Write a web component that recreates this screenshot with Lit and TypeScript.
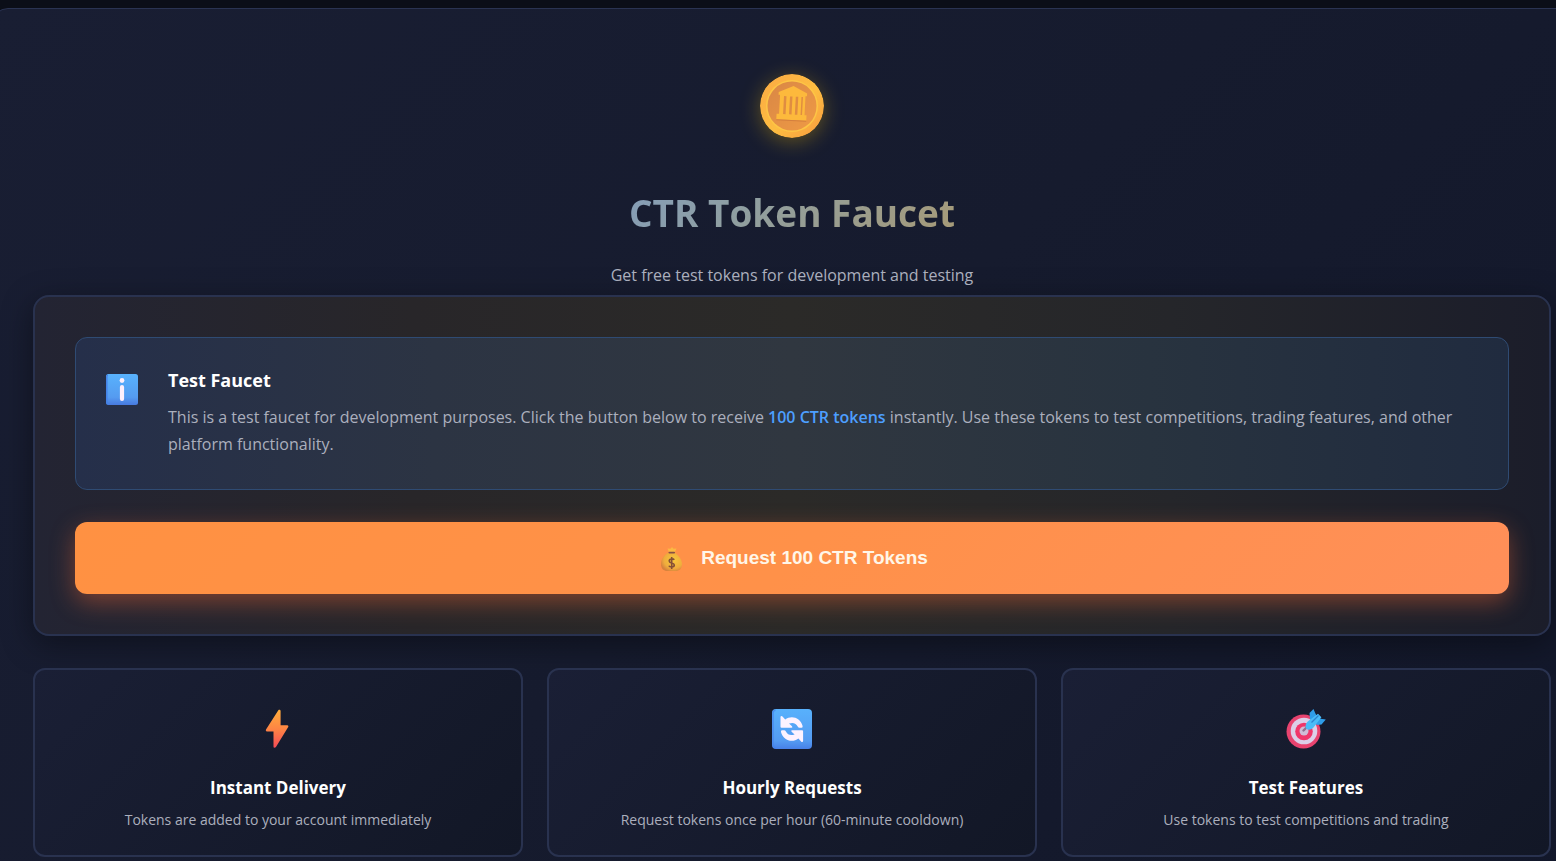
import { LitElement, html, css, svg } from "lit";
import { customElement } from "lit/decorators.js";

const coin = svg`
  <defs>
    <linearGradient id="rim" x1="0" y1="0" x2="1" y2="1">
      <stop offset="0" stop-color="#fba944" /><stop offset=".55" stop-color="#fdbd41" /><stop offset="1" stop-color="#f89b3f" />
    </linearGradient>
    <linearGradient id="face" x1="0" y1="0" x2="1" y2="1">
      <stop offset="0" stop-color="#d98745" /><stop offset="1" stop-color="#ef9a45" />
    </linearGradient>
  </defs>
  <circle cx="32" cy="32" r="32" fill="url(#rim)" />
  <circle cx="32" cy="32" r="26" fill="#fdc545" />
  <circle cx="32" cy="32" r="24.500" fill="url(#face)" />
  <g transform="rotate(3 32 32)">
    <path d="M32.500 12 46.500 18.800V21.500H45V40.500H47V46H17V40.500H19.500V21.500H18V18.800Z" fill="#fdb93c" />
    <path d="M23.500 22.500h2.500V40.500h-2.500zM29.500 22.500h2.500V40.500h-2.500zM35.300 22.500h2.500V40.500h-2.500zM41 22.500h1.500V40.500h-1.500z" fill="#e08d41" />
    <path d="M17 46.500H47" stroke="#d47f3f" stroke-width="1" />
  </g>`;

const info = svg`
  <defs>
    <linearGradient id="tile" x1="0" y1="0" x2="0" y2="1">
      <stop offset="0" stop-color="#58b2fd" /><stop offset=".75" stop-color="#559bf0" /><stop offset="1" stop-color="#4779df" />
    </linearGradient>
  </defs>
  <rect width="32" height="31" rx="2.500" fill="url(#tile)" />
  <path d="M2 1Q.8 1 .8 3V28Q.8 30 3 30" fill="none" stroke="#4482e6" stroke-width="1.500" />
  <circle cx="16" cy="6.500" r="2.400" fill="#fff0fc" />
  <path d="M16 13V25" stroke="#fff0fc" stroke-width="4.200" stroke-linecap="round" />`;

const bag = svg`
  <defs>
    <radialGradient id="sack" cx=".6" cy=".4" r=".65">
      <stop offset="0" stop-color="#f8c83c" /><stop offset=".7" stop-color="#efac3d" /><stop offset="1" stop-color="#d7823d" />
    </radialGradient>
  </defs>
  <path d="M6.500 6C3 8.500 0 12 0 17C0 22 3 24 6 24H15C18 24 21 22 21 17C21 12 17 8.500 14.500 6Z" fill="url(#sack)" />
  <path d="M8 5 6.500 1.500 9.500 1.800 11 0 12.500 1.800 15.500 1.500 14 5Z" fill="#fbb843" />
  <rect x="7.500" y="4.800" width="6.500" height="1.800" rx=".8" fill="#855044" />
  <path d="M13.200 12.800C12.500 11.500 8.200 11.400 8.200 13.900C8.200 16.600 13.300 15.300 13.300 18C13.300 20.600 8.600 20.400 7.900 18.700M10.700 10V22" fill="none" stroke="#855037" stroke-width="1.600" />`;

const bolt = svg`
  <defs>
    <linearGradient id="flash" x1="0" y1="0" x2="0" y2="1">
      <stop offset="0" stop-color="#ffad3b" /><stop offset=".5" stop-color="#fd8544" /><stop offset="1" stop-color="#f64b56" />
    </linearGradient>
  </defs>
  <path transform="translate(-2 0)" d="M22.500 1C23.500 .5 24.600 1 24.600 2V16.300H31.500Q33 16.800 32.200 18L19.800 38.300Q17.500 39.500 17.500 37.500V22.500H10.700Q9.300 22 10 20.600Z" fill="url(#flash)" />`;

const cycle = svg`
  <defs>
    <linearGradient id="key" x1="0" y1="0" x2="0" y2="1">
      <stop offset="0" stop-color="#58b1fc" /><stop offset=".8" stop-color="#549bf2" /><stop offset="1" stop-color="#4780e8" />
    </linearGradient>
  </defs>
  <rect width="40" height="40" rx="4" fill="url(#key)" />
  <path d="M3.500 1.200Q1 1.500 1 4V35.500Q1.200 38.500 4 39" fill="none" stroke="#4582eb" stroke-width="1.600" opacity=".7" />
  <g fill="#fdf2ff">
    <path id="turn" d="M9.500 7Q8.500 7 8.500 8V17.800Q8.500 18.800 9.500 18.800H19.600Q21 18.400 20 17.300L17 14.600Q23 12.400 25.700 17.500Q26.300 18.800 27.500 18.800H29.600Q31 18.600 30.600 17C28.500 8.200 19 6 13.200 10.500L10.500 7.500Q10 7 9.500 7Z" />
    <use href="#turn" transform="rotate(180 19.800 20)" />
  </g>`;

const target = svg`
  <circle cx="17.500" cy="22.500" r="17" fill="#e8436f" />
  <circle cx="18" cy="22" r="13.300" fill="#dccfe8" />
  <circle cx="18" cy="22.500" r="8.800" fill="#f0366a" />
  <circle cx="18" cy="22" r="4.500" fill="#d0bcd6" />
  <path d="M17.500 21.500 22 17" stroke="#8d7090" stroke-width="2.400" stroke-linecap="round" />
  <path d="M24 10 23.500 4 27.500 0Q29 4 31 7.500L33 9.500 39.800 10.500 35.500 15.500 31 16Z" fill="#2f9de8" />
  <path d="M19.500 17.500Q19.500 14 23 11.500L32 4.800 35.400 8.300 27.500 18.500Q24.500 21.500 21.500 20.500Q19.500 19.800 19.500 17.500Z" fill="#49bcf8" />
  <path d="M25.500 13.500 32.500 6.500" stroke="#2c83ce" stroke-width="1.200" />`;

const features = [
  { icon: bolt, title: "Instant Delivery", text: "Tokens are added to your account immediately" },
  { icon: cycle, title: "Hourly Requests", text: "Request tokens once per hour (60-minute cooldown)" },
  { icon: target, title: "Test Features", text: "Use tokens to test competitions and trading" },
];

@customElement("app-root")
export class AppRoot extends LitElement {
  static styles = css`
    :host {
      display: block;
      box-sizing: border-box;
      min-height: 100vh;
      padding-top: 8px;
      overflow: hidden;
      background: #0b0e18;
      color: #fff;
      font-family: "Segoe UI", "Open Sans", sans-serif;
    }
    * { box-sizing: border-box; margin: 0; }
    svg { display: block; flex: none; }
    .panel {
      margin: 0 -36px 0 -8px;
      padding: 56px 40px 40px;
      border: 1px solid #2a3352;
      border-radius: 16px;
      background: linear-gradient(135deg, #191e33 0%, #161b2e 50%, #12172a 100%);
    }
    .hero { display: flex; flex-direction: column; align-items: center; text-align: center; }
    .coin {
      margin: 9px 0 47px;
      border-radius: 50%;
      filter: drop-shadow(0 4px 10px rgba(255, 200, 0, 0.32));
    }
    h1 {
      font-size: 37px;
      line-height: 56px;
      font-weight: 700;
      background: linear-gradient(135deg, #849db9 0%, #8f9fa2 35%, #a79a76 100%);
      background-clip: text;
      -webkit-background-clip: text;
      color: transparent;
    }
    .subtitle { margin-top: 20px; font-size: 16px; line-height: 28px; color: #abafbd; }
    .faucet {
      margin-top: 6px;
      padding: 40px;
      border: 2px solid #29324f;
      border-radius: 16px;
      background: linear-gradient(90deg, #232433 0%, #282629 25%, #2b2a28 50%, #25262a 75%, #1b1d2a 100%);
      box-shadow: 0 8px 32px rgba(0, 0, 0, 0.4);
    }
    .note {
      display: flex;
      gap: 30px;
      padding: 28px 30px 31px;
      border: 1px solid #2f4b73;
      border-radius: 12px;
      background: linear-gradient(90deg, #252f4a 0%, #2c3443 25%, #303740 50%, #28333f 75%, #202b3f 100%);
    }
    .note svg { margin-top: 8px; }
    .note h2 { font-size: 18px; line-height: 28px; font-weight: 700; }
    .note p { margin-top: 10px; font-size: 16px; line-height: 27px; color: #abafbd; }
    .note strong { color: #4d9fff; font-weight: 600; }
    .request {
      display: flex;
      align-items: center;
      justify-content: center;
      gap: 18px;
      width: 100%;
      height: 72px;
      margin-top: 32px;
      border: 0;
      border-radius: 12px;
      background: linear-gradient(135deg, #ff9142 0%, #ff9149 50%, #ff8f59 100%);
      box-shadow: 0 8px 24px rgba(255, 107, 53, 0.4);
      color: #fff6e8;
      font: 700 19px "Liberation Sans", Arial, sans-serif;
      cursor: pointer;
    }
    .features {
      display: grid;
      grid-template-columns: repeat(3, 1fr);
      gap: 24px;
      margin-top: 32px;
    }
    .feature {
      display: flex;
      flex-direction: column;
      align-items: center;
      padding: 39px 30px 24px;
      border: 2px solid #29324f;
      border-radius: 12px;
      background: linear-gradient(135deg, #1a1f35 0%, #121726 100%);
      text-align: center;
    }
    .feature h3 { margin-top: 25px; font-size: 17px; line-height: 28px; font-weight: 700; }
    .feature p { margin-top: 7px; font-size: 14px; line-height: 22px; color: #abafbd; }
  `;

  render() {
    return html`
      <main class="panel">
        <header class="hero">
          <svg class="coin" width="64" height="64" viewBox="0 0 64 64" aria-hidden="true">${coin}</svg>
          <h1>CTR Token Faucet</h1>
          <p class="subtitle">Get free test tokens for development and testing</p>
        </header>
        <section class="faucet">
          <div class="note">
            <svg width="32" height="32" viewBox="0 0 32 32" aria-hidden="true">${info}</svg>
            <div>
              <h2>Test Faucet</h2>
              <p>This is a test faucet for development purposes. Click the button below to receive <strong>100 CTR tokens</strong> instantly. Use these tokens to test competitions, trading features, and other platform functionality.</p>
            </div>
          </div>
          <button class="request" type="button">
            <svg width="27" height="26" viewBox="-5 -2 27 26" aria-hidden="true">${bag}</svg>
            <span>Request 100 CTR Tokens</span>
          </button>
        </section>
        <section class="features">
          ${features.map((f) => html`
            <article class="feature">
              <svg width="40" height="40" viewBox="0 0 40 40" aria-hidden="true">${f.icon}</svg>
              <h3>${f.title}</h3>
              <p>${f.text}</p>
            </article>`)}
        </section>
      </main>`;
  }
}
